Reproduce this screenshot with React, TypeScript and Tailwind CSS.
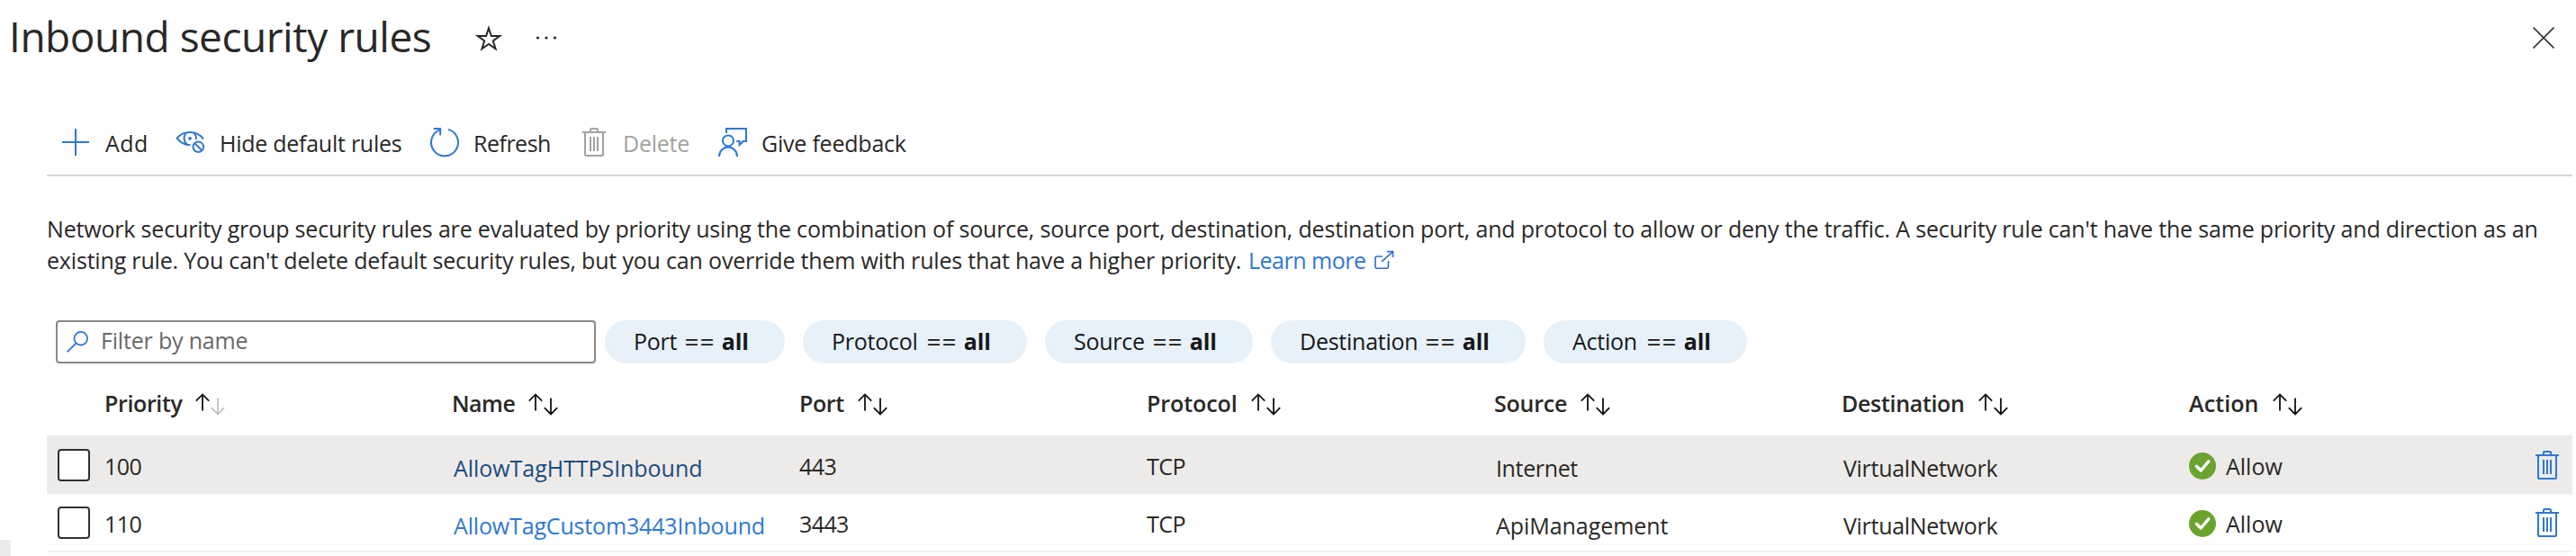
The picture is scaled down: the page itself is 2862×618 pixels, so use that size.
import type { ReactNode } from "react";

type IconProps = { className?: string };

function StarIcon() {
  return (
    <svg width="32" height="32" viewBox="0 0 32 32" fill="none" stroke="#292827" strokeWidth="2">
      <path d="M16 5.2 18.9 14H28.2L20.8 19.5 23.6 28.3 16 22.9 8.4 28.3 11.2 19.5 3.8 14H13.1Z" />
    </svg>
  );
}

function MoreIcon() {
  return (
    <svg width="32" height="32" viewBox="0 0 32 32" fill="#292827">
      <circle cx="6.5" cy="16" r="1.6" />
      <circle cx="16" cy="16" r="1.6" />
      <circle cx="25.5" cy="16" r="1.6" />
    </svg>
  );
}

function CloseIcon() {
  return (
    <svg width="26" height="26" viewBox="0 0 26 26" fill="none" stroke="#292827" strokeWidth="1.7">
      <path d="M1.5 1.5 24.5 24.5M24.5 1.5 1.5 24.5" />
    </svg>
  );
}

function Icon36({ children, className }: { children: ReactNode; className?: string }) {
  return (
    <svg
      width="36"
      height="36"
      viewBox="0 0 36 36"
      fill="none"
      stroke="currentColor"
      strokeWidth="2"
      className={className}
    >
      {children}
    </svg>
  );
}

function AddIcon({ className }: IconProps) {
  return (
    <Icon36 className={className}>
      <path d="M18 2V32M3 17H33" />
    </Icon36>
  );
}

function HideIcon({ className }: IconProps) {
  return (
    <Icon36 className={className}>
      <path d="M17.5 20.2C10.5 20.2 5.5 16.5 2.6 12.7 6 8.5 11 6 17 6 23.5 6 28.6 8.8 32 13.6" />
      <path d="M12.6 7.2C9.6 10.6 9.8 15.6 13.6 19.4M21.8 7.2C23.8 9.4 24.2 11.4 23.8 14.2" />
      <circle cx="17" cy="12.8" r="1.9" fill="currentColor" stroke="none" />
      <circle cx="26.3" cy="22.2" r="5.8" />
      <path d="M22.2 18.1 30.4 26.3" />
    </Icon36>
  );
}

function RefreshIcon({ className }: IconProps) {
  return (
    <Icon36 className={className}>
      <path d="M22 2.9A15 15 0 1 1 12.6 3.4" />
      <path d="M5.6 2H13.2V9.4" />
    </Icon36>
  );
}

function TrashIcon({ className }: IconProps) {
  return (
    <Icon36 className={className}>
      <path d="M5 6H31M14 6V3Q14 2 15 2H21Q22 2 22 3V6" />
      <path d="M8 6V31Q8 32 9 32H27Q28 32 28 31V6" />
      <path d="M14 11V27M18 11V27M22 11V27" />
    </Icon36>
  );
}

function FeedbackIcon({ className }: IconProps) {
  return (
    <Icon36 className={className}>
      <path d="M11 7V2H33V16H29.6L25.6 20V16H22.2" />
      <circle cx="13" cy="15.4" r="6" />
      <path d="M3 33A10 10.6 0 0 1 23 33" />
    </Icon36>
  );
}

function ExternalIcon() {
  return (
    <svg width="26" height="26" viewBox="0 0 26 26" fill="none" stroke="#2f6fd0" strokeWidth="1.6" className="mt-[3px]">
      <path d="M12 10H6Q4 10 4 12V21.3Q4 23.3 6 23.3H16.5Q18.5 23.3 18.5 21.3V15" />
      <path d="M11 15.8 23.4 4.8M17 4.6H23.6V11" />
    </svg>
  );
}

function SearchIcon() {
  return (
    <svg width="24" height="24" viewBox="0 0 24 24" fill="none" stroke="#2f74d0" strokeWidth="1.8" className="shrink-0">
      <circle cx="15.8" cy="8.2" r="7.3" />
      <path d="M10.6 13.4 0.8 23.2" />
    </svg>
  );
}

function SortIcon({ ascending }: { ascending?: boolean }) {
  return (
    <svg width="34" height="28" viewBox="0 0 34 28" fill="none" stroke="#111111" strokeWidth="1.8">
      <path d="M8 4V22.4M0.8 11.6 8 4.4 15.2 11.6" />
      <path d="M25 8.4V26.6M17.8 19.2 25 26.4 32.2 19.2" stroke={ascending ? "#c3c2c1" : "#111111"} />
    </svg>
  );
}

function AllowIcon() {
  return (
    <svg width="30" height="30" viewBox="0 0 30 30" fill="none" className="mt-[2px]">
      <circle cx="15" cy="15" r="15" fill="#6ba32f" />
      <path d="M8.4 15.3 13.2 20 21.8 9.8" stroke="#ffffff" strokeWidth="3.4" strokeLinecap="round" strokeLinejoin="round" />
    </svg>
  );
}

const commands = [
  { label: "Add", Icon: AddIcon, box: "w-[128px]", text: "tracking-[0.4px] pl-[1px]", disabled: false },
  { label: "Hide default rules", Icon: HideIcon, box: "w-[282px]", text: "tracking-[-0.26px]", disabled: false },
  { label: "Refresh", Icon: RefreshIcon, box: "w-[166px]", text: "tracking-[-0.5px]", disabled: false },
  { label: "Delete", Icon: TrashIcon, box: "w-[154px]", text: "tracking-[-0.26px]", disabled: true },
  { label: "Give feedback", Icon: FeedbackIcon, box: "w-[220px]", text: "tracking-[-0.22px]", disabled: false },
];

const filters = [
  { label: "Port", box: "w-[200px] pl-[32px]" },
  { label: "Protocol", box: "w-[249px] pl-[32px]" },
  { label: "Source", box: "w-[231px] pl-[32px]" },
  { label: "Destination", box: "w-[283px] pl-[32px]" },
  { label: "Action", box: "w-[226px] pl-[32px]" },
];

const columns = [
  { label: "Priority", text: "tracking-[-0.37px]" },
  { label: "Name", text: "tracking-[-0.5px]" },
  { label: "Port", text: "tracking-[-0.4px]" },
  { label: "Protocol", text: "tracking-[-0.08px]" },
  { label: "Source", text: "tracking-[-0.22px]" },
  { label: "Destination", text: "tracking-[-0.32px]" },
  { label: "Action", text: "tracking-[0.1px]" },
];

const rules = [
  {
    priority: "100",
    name: "AllowTagHTTPSInbound",
    nameText: "text-[#1b4a80] tracking-[-0.05px]",
    port: "443",
    protocol: "TCP",
    source: "Internet",
    sourceText: "tracking-[-0.36px]",
    destination: "VirtualNetwork",
    row: "bg-[#edebe9]",
  },
  {
    priority: "110",
    name: "AllowTagCustom3443Inbound",
    nameText: "text-[#2f78d3] tracking-[-0.16px]",
    port: "3443",
    protocol: "TCP",
    source: "ApiManagement",
    sourceText: "tracking-[-0.05px]",
    destination: "VirtualNetwork",
    row: "bg-white",
  },
];

export default function App() {
  return (
    <div className="flex h-[618px] w-full flex-col overflow-hidden bg-white font-['Open_Sans','Noto_Sans',sans-serif] text-[25px] leading-[34px] whitespace-nowrap text-[#292827]">
      <header className="flex h-[81px] shrink-0 items-center pl-[10px]">
        <h1 className="w-[517px] text-[46px] leading-[81px] tracking-[-0.47px]">Inbound security rules</h1>
        <div className="mt-[3px] flex flex-1 items-center gap-8">
          <StarIcon />
          <MoreIcon />
        </div>
        <div className="mt-[3px] pr-[23px]">
          <CloseIcon />
        </div>
      </header>

      <div className="mr-1 ml-[52px] flex h-[115px] shrink-0 items-start border-b-2 border-[#d6d6d6] pt-[60px] pl-[14px]">
        {commands.map(({ label, Icon, box, text, disabled }) => (
          <div key={label} className={`flex h-9 shrink-0 items-center gap-[14px] ${box} ${disabled ? "text-[#a3a2a0]" : ""}`}>
            <Icon className={disabled ? "text-[#a3a2a0]" : "text-[#2f78d3]"} />
            <span className={text}>{label}</span>
          </div>
        ))}
      </div>

      <div className="shrink-0 pt-[41px] pl-[52px] leading-[35px] tracking-[-0.18px]">
        <div className="h-[35px]">
          Network security group security rules are evaluated by priority using the combination of source, source port,
          destination, destination port, and protocol to allow or deny the traffic. A security rule can't have the same
          priority and direction as an
        </div>
        <div className="flex h-[35px] items-start">
          <span className="w-[1335px]">
            existing rule. You can't delete default security rules, but you can override them with rules that have a
            higher priority.
          </span>
          <span className="w-[137px] tracking-[-0.5px] text-[#2f78d3]">Learn more</span>
          <ExternalIcon />
        </div>
      </div>

      <div className="mt-[49px] flex h-12 shrink-0 items-center pl-[62px]">
        <div className="mr-[10px] flex h-12 w-[600px] items-center gap-[14px] rounded-[4px] border-2 border-[#8a8886] pl-[10px]">
          <SearchIcon />
          <span className="pb-1 tracking-[-0.18px] text-[#696765]">Filter by name</span>
        </div>
        <div className="flex gap-5">
          {filters.map(({ label, box }) => (
            <div key={label} className={`flex h-12 items-center rounded-full bg-[#e6f1fa] pr-[40px] pb-[2px] text-[#171717] ${box}`}>
              <span className="tracking-[-0.25px]">{label}</span>
              <span className="ml-auto text-[28px] leading-[30px] tracking-[1px]">==</span>
              <span className="ml-[7px] font-bold">all</span>
            </div>
          ))}
        </div>
      </div>

      <div className="flex flex-1">
        <div className="flex w-[52px] shrink-0 items-end">
          <div className="h-[18px] w-3 bg-[#edebe9]" />
        </div>
        <div className="mr-1 flex-1">
          <div className="grid h-[82px] grid-cols-[64px_repeat(6,386px)_1fr] items-center border-b-2 border-[#edebe9] pt-2">
            <span />
            {columns.map(({ label, text }, i) => (
              <div key={label} className="flex items-center gap-[15px]">
                <span className={`font-semibold ${text}`}>{label}</span>
                <SortIcon ascending={i === 0} />
              </div>
            ))}
          </div>
          {rules.map((rule) => (
            <div
              key={rule.priority}
              className={`grid h-16 grid-cols-[64px_repeat(6,386px)_1fr] items-center border-b-2 border-[#f2f1f0] ${rule.row}`}
            >
              <span className="ml-3 size-9 rounded-[4px] border-2 border-[#323130] bg-white" />
              <span className="pt-[2px] tracking-[-0.5px]">{rule.priority}</span>
              <span className={`pt-[6px] pl-[2px] ${rule.nameText}`}>{rule.name}</span>
              <span className="pt-[2px] tracking-[-0.6px]">{rule.port}</span>
              <span className="pt-[2px] tracking-[-0.45px]">{rule.protocol}</span>
              <span className={`pt-[6px] pl-[2px] ${rule.sourceText}`}>{rule.source}</span>
              <span className="pt-[6px] pl-[2px] tracking-[-0.3px]">{rule.destination}</span>
              <div className="flex items-center pr-[10px]">
                <AllowIcon />
                <span className="flex-1 pt-[2px] pl-[11px]">Allow</span>
                <TrashIcon className="mt-[2px] text-[#2f78d3]" />
              </div>
            </div>
          ))}
        </div>
      </div>
    </div>
  );
}
